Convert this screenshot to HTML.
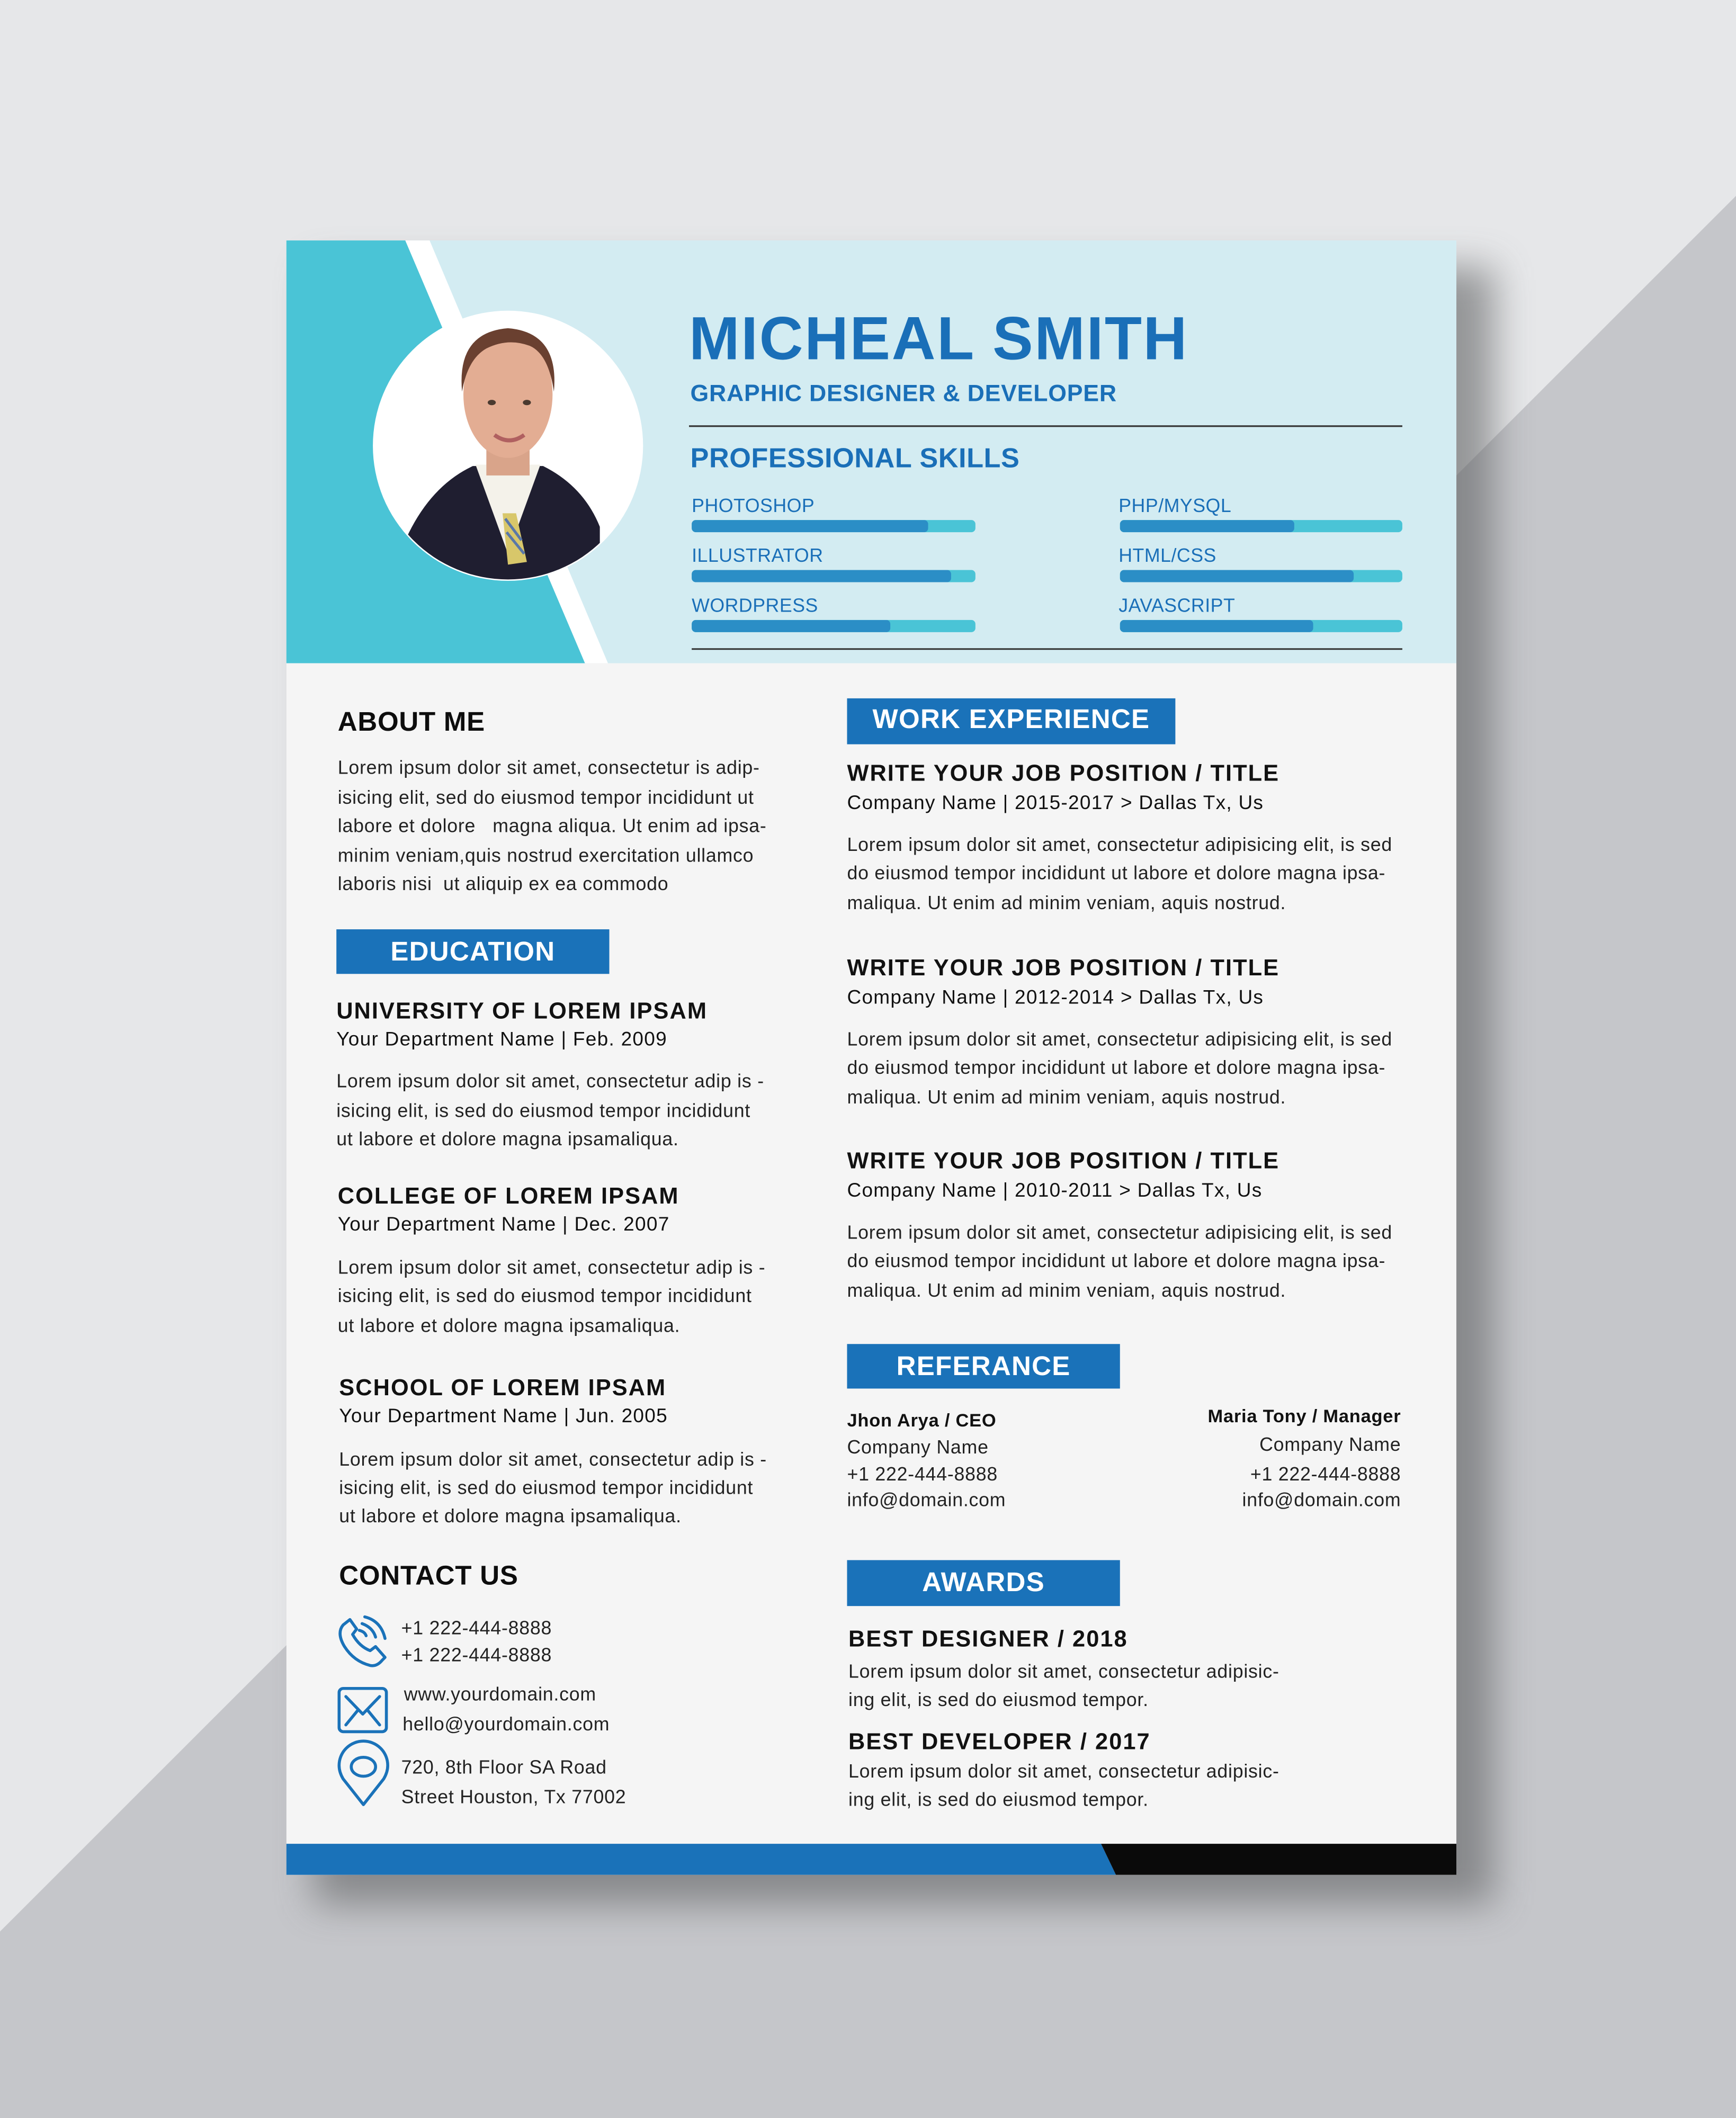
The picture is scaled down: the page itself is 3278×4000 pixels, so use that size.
<!DOCTYPE html>
<html><head><meta charset="utf-8">
<style>
html,body{margin:0;padding:0;width:3278px;height:4000px;overflow:hidden;background:#e6e7e9}
#s{position:absolute;left:0;top:0;width:1285px;height:1568px;transform:scale(2.5510);transform-origin:0 0;font-family:"Liberation Sans",sans-serif}
.t{position:absolute;white-space:nowrap;height:22px;line-height:22px;color:#1b1b1b}
.b{font-size:14px;letter-spacing:0.3px;color:#222}
.h{font-size:20px;font-weight:bold;color:#0d0d0d;letter-spacing:0.3px}
.jt{font-size:17px;font-weight:bold;color:#111;letter-spacing:0.8px}
.sub{font-size:14.5px;color:#111;letter-spacing:0.5px}
.box{position:absolute;background:#1a72b9;color:#fff;font-weight:bold;font-size:20px;text-align:center;letter-spacing:0.5px}
.sk{font-size:14px;color:#1a6fb8;letter-spacing:0.2px}
.bar{position:absolute;height:9px;border-radius:3px;background:#4ac4d6;overflow:hidden}
.bar i{position:absolute;left:0;top:0;bottom:0;background:#2b8ec6;border-radius:3px}
</style></head><body>
<div id="s">
<svg width="1285" height="1568" style="position:absolute;left:0;top:0">
<defs>
<filter id="sh" x="-10%" y="-10%" width="130%" height="130%"><feGaussianBlur stdDeviation="14"/></filter>
<clipPath id="cc"><circle cx="376" cy="330" r="99"/></clipPath>
</defs>
<rect width="1285" height="1568" fill="#e6e7e9"/>
<polygon points="1285,145 1285,1568 0,1568 0,1430" fill="#c5c6ca"/>
<rect x="232" y="198" width="874" height="1212" fill="#5f6062" opacity="0.6" filter="url(#sh)"/>
<rect x="212" y="178" width="866" height="1210" fill="#f5f5f5"/>
<rect x="212" y="178" width="866" height="313" fill="#d3ecf2"/>
<polygon points="212,178 300,178 433,491 212,491" fill="#4ac4d6"/>
<polygon points="300,178 318,178 450,491 433,491" fill="#fff"/>
<circle cx="376" cy="330" r="100" fill="#fff"/>
<g clip-path="url(#cc)">
<path d="M300,400 Q318,360 350,345 L402,345 Q432,360 444,390 L444,430 L300,430 Z" fill="#1f1e30"/>
<path d="M352,344 L376,410 L400,344 Z" fill="#f4f2ea"/>
<path d="M372,380 L382,380 L390,416 L376,418 Z" fill="#d8c76a"/>
<path d="M374,384 L386,400 M375,394 L388,410" stroke="#5a78a8" stroke-width="2"/>
<rect x="360" y="320" width="32" height="32" fill="#d9a48a"/>
<ellipse cx="376" cy="292" rx="33" ry="47" fill="#e3ad93"/>
<path d="M342,290 Q338,246 376,243 Q414,246 410,290 Q406,262 392,256 Q376,250 360,258 Q346,266 342,290 Z" fill="#6a4030"/>
<ellipse cx="364" cy="298" rx="3" ry="2" fill="#4a3a30"/><ellipse cx="390" cy="298" rx="3" ry="2" fill="#4a3a30"/>
<path d="M366,322 Q377,330 388,322" stroke="#b06060" stroke-width="3" fill="none"/>
</g>
<line x1="510" y1="315.5" x2="1038" y2="315.5" stroke="#333" stroke-width="1.2"/>
<line x1="512" y1="480.5" x2="1038" y2="480.5" stroke="#333" stroke-width="1.2"/>
<polygon points="212,1365 815,1365 826,1388 212,1388" fill="#1a72b9"/>
<polygon points="815,1365 1078,1365 1078,1388 826,1388" fill="#0a0a0a"/>
<g fill="none" stroke="#1a72b9" stroke-width="2.2" stroke-linecap="round" stroke-linejoin="round">
<path d="M259,1199 L254,1203 Q249,1209 255,1219 Q262,1230 274,1233 Q279,1234 283,1229 L285,1227 L278,1219 L274,1222 Q266,1219 261,1210 L264,1206 Z"/>
<path d="M268,1202 Q276,1205 278,1212 M270,1197 Q282,1200 285,1213 M266,1207 Q270,1208 271,1211"/>
<rect x="251" y="1250" width="35" height="32" rx="3"/>
<path d="M256,1256 L268.5,1269 L281,1256 M256,1277 L265,1266 M281,1277 L272,1266"/>
<path d="M269,1336 L254,1317 Q251,1312 251,1307 A18,18 0 0 1 287,1307 Q287,1312 284,1317 Z"/>
<ellipse cx="269" cy="1308" rx="9" ry="7"/>
</g>
</svg>

<div class="t" style="left:510px;top:229px;height:44px;line-height:44px;font-size:45px;font-weight:bold;color:#1a6fb8;letter-spacing:1px">MICHEAL SMITH</div>
<div class="t" style="left:511px;top:280px;font-size:17.5px;font-weight:bold;color:#1a6fb8;letter-spacing:0.3px">GRAPHIC DESIGNER &amp; DEVELOPER</div>
<div class="t" style="left:511px;top:329px;font-size:20.5px;font-weight:bold;color:#1a6fb8;letter-spacing:0.2px">PROFESSIONAL SKILLS</div>
<div class="t sk" style="left:512px;top:363px">PHOTOSHOP</div>
<div class="t sk" style="left:512px;top:400px">ILLUSTRATOR</div>
<div class="t sk" style="left:512px;top:437px">WORDPRESS</div>
<div class="t sk" style="left:828px;top:363px">PHP/MYSQL</div>
<div class="t sk" style="left:828px;top:400px">HTML/CSS</div>
<div class="t sk" style="left:828px;top:437px">JAVASCRIPT</div>
<div class="bar" style="left:512px;top:385px;width:210px"><i style="width:175px"></i></div>
<div class="bar" style="left:512px;top:422px;width:210px"><i style="width:192px"></i></div>
<div class="bar" style="left:512px;top:459px;width:210px"><i style="width:147px"></i></div>
<div class="bar" style="left:829px;top:385px;width:209px"><i style="width:129px"></i></div>
<div class="bar" style="left:829px;top:422px;width:209px"><i style="width:173px"></i></div>
<div class="bar" style="left:829px;top:459px;width:209px"><i style="width:143px"></i></div>

<div class="t h" style="left:250px;top:524px">ABOUT ME</div>
<div class="t b" style="left:250px;top:557px">Lorem ipsum dolor sit amet, consectetur is adip-</div>
<div class="t b" style="left:250px;top:579px">isicing elit, sed do eiusmod tempor incididunt ut</div>
<div class="t b" style="left:250px;top:600px">labore et dolore &nbsp; magna aliqua. Ut enim ad ipsa-</div>
<div class="t b" style="left:250px;top:622px">minim veniam,quis nostrud exercitation ullamco</div>
<div class="t b" style="left:250px;top:643px">laboris nisi &nbsp;ut aliquip ex ea commodo</div>

<div class="box" style="left:249px;top:688px;width:202px;height:33px;line-height:34px">EDUCATION</div>
<div class="t jt" style="left:249px;top:738px">UNIVERSITY OF LOREM IPSAM</div>
<div class="t sub" style="left:249px;top:759px">Your Department Name | Feb. 2009</div>
<div class="t b" style="left:249px;top:789px">Lorem ipsum dolor sit amet, consectetur adip is -</div>
<div class="t b" style="left:249px;top:811px">isicing elit, is sed do eiusmod tempor incididunt</div>
<div class="t b" style="left:249px;top:832px">ut labore et dolore magna ipsamaliqua.</div>

<div class="t jt" style="left:250px;top:875px">COLLEGE OF LOREM IPSAM</div>
<div class="t sub" style="left:250px;top:896px">Your Department Name | Dec. 2007</div>
<div class="t b" style="left:250px;top:927px">Lorem ipsum dolor sit amet, consectetur adip is -</div>
<div class="t b" style="left:250px;top:948px">isicing elit, is sed do eiusmod tempor incididunt</div>
<div class="t b" style="left:250px;top:970px">ut labore et dolore magna ipsamaliqua.</div>

<div class="t jt" style="left:251px;top:1017px">SCHOOL OF LOREM IPSAM</div>
<div class="t sub" style="left:251px;top:1038px">Your Department Name | Jun. 2005</div>
<div class="t b" style="left:251px;top:1069px">Lorem ipsum dolor sit amet, consectetur adip is -</div>
<div class="t b" style="left:251px;top:1090px">isicing elit, is sed do eiusmod tempor incididunt</div>
<div class="t b" style="left:251px;top:1111px">ut labore et dolore magna ipsamaliqua.</div>

<div class="t h" style="left:251px;top:1156px">CONTACT US</div>
<div class="t b" style="left:297px;top:1194px">+1 222-444-8888</div>
<div class="t b" style="left:297px;top:1214px">+1 222-444-8888</div>
<div class="t b" style="left:299px;top:1243px">www.yourdomain.com</div>
<div class="t b" style="left:298px;top:1265px">hello@yourdomain.com</div>
<div class="t b" style="left:297px;top:1297px">720, 8th Floor SA Road</div>
<div class="t b" style="left:297px;top:1319px">Street Houston, Tx 77002</div>

<div class="box" style="left:627px;top:517px;width:243px;height:34px;line-height:33px">WORK EXPERIENCE</div>
<div class="t jt" style="left:627px;top:562px">WRITE YOUR JOB POSITION / TITLE</div>
<div class="t sub" style="left:627px;top:584px">Company Name | 2015-2017 &gt; Dallas Tx, Us</div>
<div class="t b" style="left:627px;top:614px">Lorem ipsum dolor sit amet, consectetur adipisicing elit, is sed</div>
<div class="t b" style="left:627px;top:635px">do eiusmod tempor incididunt ut labore et dolore magna ipsa-</div>
<div class="t b" style="left:627px;top:657px">maliqua. Ut enim ad minim veniam, aquis nostrud.</div>

<div class="t jt" style="left:627px;top:706px">WRITE YOUR JOB POSITION / TITLE</div>
<div class="t sub" style="left:627px;top:728px">Company Name | 2012-2014 &gt; Dallas Tx, Us</div>
<div class="t b" style="left:627px;top:758px">Lorem ipsum dolor sit amet, consectetur adipisicing elit, is sed</div>
<div class="t b" style="left:627px;top:779px">do eiusmod tempor incididunt ut labore et dolore magna ipsa-</div>
<div class="t b" style="left:627px;top:801px">maliqua. Ut enim ad minim veniam, aquis nostrud.</div>

<div class="t jt" style="left:627px;top:849px">WRITE YOUR JOB POSITION / TITLE</div>
<div class="t sub" style="left:627px;top:871px">Company Name | 2010-2011 &gt; Dallas Tx, Us</div>
<div class="t b" style="left:627px;top:901px">Lorem ipsum dolor sit amet, consectetur adipisicing elit, is sed</div>
<div class="t b" style="left:627px;top:922px">do eiusmod tempor incididunt ut labore et dolore magna ipsa-</div>
<div class="t b" style="left:627px;top:944px">maliqua. Ut enim ad minim veniam, aquis nostrud.</div>

<div class="box" style="left:627px;top:995px;width:202px;height:33px;line-height:34px">REFERANCE</div>
<div class="t" style="left:627px;top:1041px;font-size:13.5px;font-weight:bold;color:#111;letter-spacing:0.3px">Jhon Arya / CEO</div>
<div class="t b" style="left:627px;top:1060px">Company Name</div>
<div class="t b" style="left:627px;top:1080px">+1 222-444-8888</div>
<div class="t b" style="left:627px;top:1099px">info@domain.com</div>
<div class="t" style="right:248px;top:1038px;font-size:13.5px;font-weight:bold;color:#111;letter-spacing:0.3px">Maria Tony / Manager</div>
<div class="t b" style="right:248px;top:1058px">Company Name</div>
<div class="t b" style="right:248px;top:1080px">+1 222-444-8888</div>
<div class="t b" style="right:248px;top:1099px">info@domain.com</div>

<div class="box" style="left:627px;top:1155px;width:202px;height:34px;line-height:35px">AWARDS</div>
<div class="t jt" style="left:628px;top:1203px">BEST DESIGNER / 2018</div>
<div class="t b" style="left:628px;top:1226px">Lorem ipsum dolor sit amet, consectetur adipisic-</div>
<div class="t b" style="left:628px;top:1247px">ing elit, is sed do eiusmod tempor.</div>
<div class="t jt" style="left:628px;top:1279px">BEST DEVELOPER / 2017</div>
<div class="t b" style="left:628px;top:1300px">Lorem ipsum dolor sit amet, consectetur adipisic-</div>
<div class="t b" style="left:628px;top:1321px">ing elit, is sed do eiusmod tempor.</div>
</div>
</body></html>
